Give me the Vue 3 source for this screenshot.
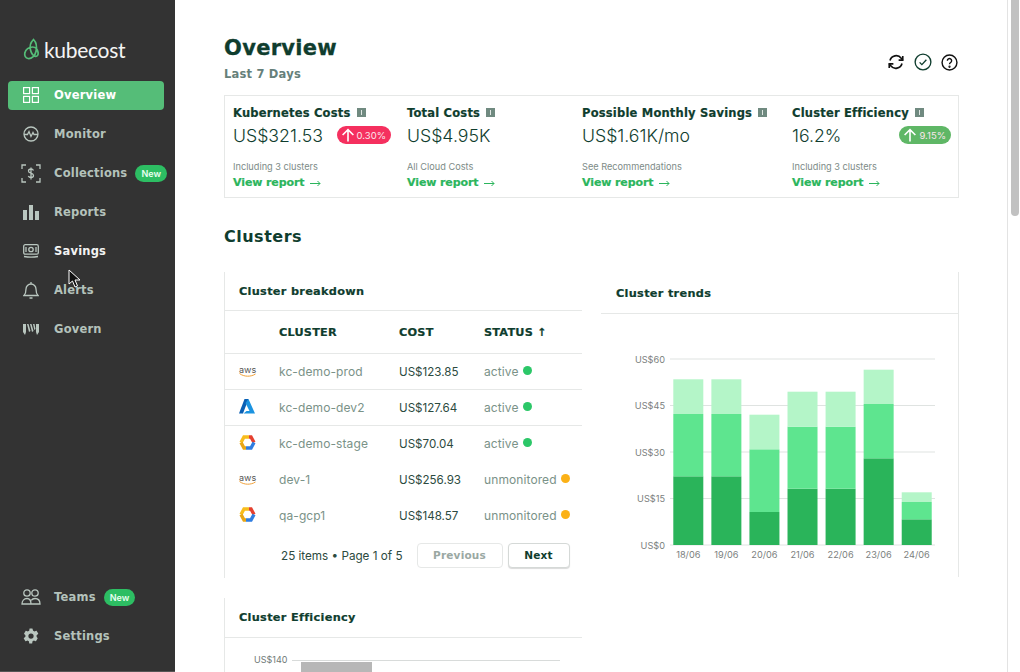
<template>
  <div class="page">
    <aside class="sidebar">
      <div class="logo">
        <svg width="18" height="22" viewBox="0 0 18 22" fill="none" stroke="#55bd78" stroke-width="1.700">
          <path d="M10.500 1.500C8 4 6.500 8 7.500 12c.8 3.200 3 6 5 6.300 1.800.3 3-1.500 2.600-3.800C14.600 11.500 12.500 9 9.500 9 6 9 2.500 11.500 1.800 15c-.5 2.700.8 5.200 3.200 5.500 3.500.5 7-2.500 8-7 .9-4 .5-9-2.500-12Z" />
        </svg>
        <span class="logo-text">kubecost</span>
      </div>
      <nav class="nav">
        <a v-for="item in topNav" :key="item.label" class="nav-item" :class="{ active: item.active, bright: item.bright }">
          <span class="nav-icon" v-html="item.icon"></span>
          <span>{{ item.label }}</span>
          <span v-if="item.badge" class="badge">New</span>
        </a>
      </nav>
      <nav class="nav nav-bottom">
        <a v-for="item in bottomNav" :key="item.label" class="nav-item">
          <span class="nav-icon" v-html="item.icon"></span>
          <span>{{ item.label }}</span>
          <span v-if="item.badge" class="badge">New</span>
        </a>
      </nav>
    </aside>

    <main class="main">
      <div class="head">
        <div>
          <h1>Overview</h1>
          <p class="range">Last 7 Days</p>
        </div>
        <div class="head-icons">
          <svg width="18" height="18" viewBox="0 0 24 24" fill="none" stroke="#111" stroke-width="2.200">
            <path d="M4 10a8.500 8.500 0 0 1 15-3l2 2.500M20 14a8.500 8.500 0 0 1-15 3l-2-2.500" />
            <path d="M21 4v5.500h-5.500M3 20v-5.500h5.500" />
          </svg>
          <svg width="18" height="18" viewBox="0 0 24 24" fill="none" stroke="#0f3d2e" stroke-width="1.800">
            <circle cx="12" cy="12" r="10.500" />
            <path d="M7.500 12.500l3 3 6-6.500" />
          </svg>
          <svg width="17" height="17" viewBox="0 0 24 24" fill="none" stroke="#111" stroke-width="2">
            <circle cx="12" cy="12" r="10.500" />
            <path d="M9 9.500a3 3 0 1 1 4.600 2.500c-1 .7-1.600 1.300-1.600 2.500" />
            <circle cx="12" cy="18" r=".6" fill="#111" />
          </svg>
        </div>
      </div>

      <section class="summary">
        <div v-for="s in summary" :key="s.title" class="stat">
          <div class="stat-title">{{ s.title }} <i class="info"></i></div>
          <div class="stat-value">
            <span>{{ s.value }}</span>
            <span v-if="s.delta" class="delta" :class="s.tone">
              <svg width="14" height="14" viewBox="0 0 13 13" fill="none" stroke="#fff" stroke-width="1.500"><path d="M6.500 12.500V1.500M1.500 6.500l5-5 5 5" /></svg>
              {{ s.delta }}
            </span>
          </div>
          <div class="stat-note">{{ s.note }}</div>
          <a class="stat-link">View report
            <svg width="11" height="7" viewBox="0 0 11 7" fill="none" stroke="#2bb55c" stroke-width="1"><path d="M0 3.500h10M7.500 1l2.500 2.500L7.500 6" /></svg>
          </a>
        </div>
      </section>

      <h2>Clusters</h2>

      <div class="panels">
        <div class="col">
          <section class="panel breakdown">
            <h3 class="panel-title">Cluster breakdown</h3>
            <table>
              <thead>
                <tr>
                  <th class="c-icon"></th>
                  <th class="c-name">CLUSTER</th>
                  <th class="c-cost">COST</th>
                  <th>STATUS <span class="sort">↑</span></th>
                </tr>
              </thead>
              <tbody>
                <tr v-for="row in clusters" :key="row.name">
                  <td class="c-icon">
                    <div v-if="row.provider === 'aws'" class="aws">
                      <span>aws</span>
                      <svg width="17" height="5" viewBox="0 0 17 5" fill="none"><path d="M.5 .5C5 4 12 4 16.500 1" stroke="#f0a13a" stroke-width="1" /></svg>
                    </div>
                    <svg v-else-if="row.provider === 'azure'" width="16" height="15" viewBox="0 0 16 15">
                      <path d="M5.500 0h4L4 14.500H0Z" fill="#0a5fb4" />
                      <path d="M9.500 0l6.500 14.500H4.500l3-2.500h3L6.500 4Z" fill="#1b93e0" />
                    </svg>
                    <svg v-else width="17" height="15" viewBox="0 0 17 15" fill="none" stroke-width="3.400">
                      <path d="M2 7.500L5 2h5" stroke="#f8bd1c" />
                      <path d="M10 2h2l3 5.500" stroke="#e5402f" />
                      <path d="M15 7.500L12 13H7" stroke="#2f7de1" />
                      <path d="M7 13H5L2 7.500" stroke="#e8a617" />
                    </svg>
                  </td>
                  <td class="name">{{ row.name }}</td>
                  <td class="cost">{{ row.cost }}</td>
                  <td class="status">{{ row.status }} <i class="dot" :class="row.status"></i></td>
                </tr>
              </tbody>
            </table>
            <div class="pager">
              <span>25 items • Page 1 of 5</span>
              <button class="btn off">Previous</button>
              <button class="btn">Next</button>
            </div>
          </section>

          <section class="panel efficiency">
            <h3 class="panel-title">Cluster Efficiency</h3>
            <div class="eff-chart">
              <span class="eff-label">US$140</span>
              <div class="eff-plot"><div class="eff-bar"></div></div>
            </div>
          </section>
        </div>

        <section class="panel trends">
          <h3 class="panel-title">Cluster trends</h3>
          <svg class="chart" width="357" height="262" viewBox="601 314 357 262">
            <g v-for="t in ticks" :key="t.label">
              <line x1="670" x2="935" :y1="t.y" :y2="t.y" stroke="#dfe3e1" stroke-width="1" />
              <text x="665" :y="t.y + 3.500" text-anchor="end" class="axis">{{ t.label }}</text>
            </g>
            <g v-for="(b, i) in bars" :key="b.day">
              <rect :x="barX(i)" :y="545 - b.d" width="30" :height="b.d" fill="#2ab45a" />
              <rect :x="barX(i)" :y="545 - b.d - b.m" width="30" :height="b.m" fill="#5ee58f" />
              <rect :x="barX(i)" :y="545 - b.d - b.m - b.l" width="30" :height="b.l" fill="#b4f5c8" />
              <text :x="barX(i) + 15" y="558" text-anchor="middle" class="axis">{{ b.day }}</text>
            </g>
          </svg>
        </section>
      </div>
    </main>

    <div class="scrollbar"><div class="thumb"></div></div>

    <svg class="cursor" width="14" height="20" viewBox="0 0 14 20">
      <path d="M1 1v14l3.500-3 2.500 6 2.500-1-2.500-6h5Z" fill="#111" stroke="#fff" stroke-width="1" />
    </svg>
  </div>
</template>

<script setup>
const stroke = 'fill="none" stroke="#b9c6bf" stroke-width="1.300"'

const topNav = [
  { label: 'Overview', active: true, icon: `<svg width="16" height="16" viewBox="0 0 16 16" fill="none" stroke="#fff" stroke-width="1.200"><rect x=".6" y=".6" width="6" height="6"/><rect x="9.400" y=".6" width="6" height="6"/><rect x=".6" y="9.400" width="6" height="6"/><rect x="9.400" y="9.400" width="6" height="6"/></svg>` },
  { label: 'Monitor', icon: `<svg width="16" height="16" viewBox="0 0 16 16" ${stroke}><circle cx="8" cy="8" r="7"/><path d="M1 8.500h3.500L6 5.500l2 5 2-4 1 2h4"/></svg>` },
  { label: 'Collections', badge: true, icon: `<svg width="20" height="19" viewBox="0 0 20 19" ${stroke}><path d="M1 5V1h4M15 1h4v4M1 14v4h4M15 18h4v-4"/><path d="M12.500 6.500c-.5-1-1.500-1.500-2.500-1.500-1.500 0-2.500.8-2.500 2s1 1.800 2.500 2.200 2.500 1 2.500 2.300-1 2-2.500 2c-1.200 0-2.200-.5-2.700-1.500M10 3.500v12"/></svg>` },
  { label: 'Reports', icon: `<svg width="16" height="15" viewBox="0 0 16 15" fill="#b9c6bf"><rect x="0" y="5" width="4" height="10"/><rect x="6" y="0" width="4" height="15"/><rect x="12" y="6" width="4" height="9"/></svg>` },
  { label: 'Savings', bright: true, icon: `<svg width="16" height="14" viewBox="0 0 16 14" ${stroke}><rect x=".7" y=".7" width="14.600" height="9.500" rx="1.500"/><circle cx="8" cy="5.500" r="2.200"/><path d="M3 3v5M13 3v5M1 12.500c4 .8 10 .8 14 0"/></svg>` },
  { label: 'Alerts', icon: `<svg width="16" height="18" viewBox="0 0 16 18" ${stroke}><path d="M1 14.500c1.500-1.500 2-3 2-6.500a5 5 0 0 1 10 0c0 3.500.5 5 2 6.500ZM6.500 17h3M8 1v2"/></svg>` },
  { label: 'Govern', icon: `<svg width="16" height="13" viewBox="0 0 16 13" fill="#b9c6bf"><path d="M0 1h3v8l-1 3-2-3ZM13 1h3v8l-2 3-1-3ZM4 1h1.500l2 7-1.500 1ZM7 1h1.500l2 7-1.500 1ZM10 1h1.500l1 5-1.200 1Z"/></svg>` },
]

const bottomNav = [
  { label: 'Teams', badge: true, icon: `<svg width="20" height="16" viewBox="0 0 20 16" ${stroke}><circle cx="6" cy="4" r="3.200"/><circle cx="14" cy="4" r="3.200"/><path d="M1 15c0-3 2-5.500 5-5.500 2 0 4 1.500 4 5.500ZM10 15h9c0-3.500-2-5.500-5-5.500-1.500 0-2.800.5-3.800 1.800"/></svg>` },
  { label: 'Settings', icon: `<svg width="18" height="18" viewBox="0 0 24 24" fill="#b9c6bf"><path d="M19.400 13c.1-.3.100-.7.100-1s0-.7-.1-1l2.100-1.600c.2-.2.200-.4.100-.6l-2-3.500c-.1-.2-.4-.3-.6-.2l-2.500 1c-.5-.4-1.100-.7-1.700-1L14 2.400c0-.2-.2-.4-.5-.4h-3c-.3 0-.5.200-.5.400l-.4 2.700c-.6.200-1.200.6-1.700 1l-2.500-1c-.2-.1-.5 0-.6.200l-2 3.500c-.1.200-.1.400.1.600L4.600 11c-.1.300-.1.700-.1 1s0 .7.100 1l-2.100 1.600c-.2.200-.2.400-.1.600l2 3.500c.1.200.4.300.6.200l2.500-1c.5.400 1.100.7 1.700 1l.4 2.700c0 .2.200.4.500.4h3c.3 0 .5-.2.500-.4l.4-2.700c.6-.2 1.200-.6 1.700-1l2.500 1c.2.100.5 0 .6-.2l2-3.500c.1-.2.100-.4-.1-.6ZM12 15.500a3.500 3.500 0 1 1 0-7 3.500 3.500 0 0 1 0 7Z"/></svg>` },
]

const summary = [
  { title: 'Kubernetes Costs', value: 'US$321.53', delta: '0.30%', tone: 'up-bad', note: 'Including 3 clusters' },
  { title: 'Total Costs', value: 'US$4.95K', note: 'All Cloud Costs' },
  { title: 'Possible Monthly Savings', value: 'US$1.61K/mo', note: 'See Recommendations' },
  { title: 'Cluster Efficiency', value: '16.2%', delta: '9.15%', tone: 'up-good', note: 'Including 3 clusters' },
]

const clusters = [
  { provider: 'aws', name: 'kc-demo-prod', cost: 'US$123.85', status: 'active' },
  { provider: 'azure', name: 'kc-demo-dev2', cost: 'US$127.64', status: 'active' },
  { provider: 'gcp', name: 'kc-demo-stage', cost: 'US$70.04', status: 'active' },
  { provider: 'aws', name: 'dev-1', cost: 'US$256.93', status: 'unmonitored' },
  { provider: 'gcp', name: 'qa-gcp1', cost: 'US$148.57', status: 'unmonitored' },
]

const ticks = [
  { label: 'US$60', y: 359 },
  { label: 'US$45', y: 405.5 },
  { label: 'US$30', y: 452 },
  { label: 'US$15', y: 498.5 },
  { label: 'US$0', y: 545 },
]

// heights in px, read off the chart: dark, mid, light
const bars = [
  { day: '18/06', d: 68.7, m: 62.3, l: 34.7 },
  { day: '19/06', d: 68.7, m: 62.3, l: 34.7 },
  { day: '20/06', d: 33, m: 62.7, l: 34.6 },
  { day: '21/06', d: 56.3, m: 62, l: 35 },
  { day: '22/06', d: 56.3, m: 62, l: 35 },
  { day: '23/06', d: 86.7, m: 54.3, l: 34.3 },
  { day: '24/06', d: 25.7, m: 17.3, l: 9.7 },
]

function barX(i) {
  return 673.3 + i * 38.07
}
</script>

<style>
html, body {
  margin: 0;
  height: 100%;
  overflow: hidden;
  background: #fff;
}
</style>

<style scoped>
.page {
  position: relative;
  display: flex;
  width: 1020px;
  height: 672px;
  overflow: hidden;
  font-family: Inter, "Liberation Sans", sans-serif;
  color: #0f3d2e;
  background: #fff;
}

.sidebar {
  flex: 0 0 175px;
  display: flex;
  flex-direction: column;
  background: #333;
  border-bottom: 1px solid #555;
  box-sizing: border-box;
}

.logo {
  display: flex;
  align-items: center;
  gap: 3px;
  height: 22px;
  margin: 38px 0 21px 23px;
}

.logo-text {
  font-size: 21px;
  letter-spacing: -0.3px;
  color: #f4f4f4;
  font-family: Lato, sans-serif;
}

.nav {
  display: flex;
  flex-direction: column;
  gap: 10px;
}

.nav-bottom {
  margin-top: auto;
  padding-bottom: 20px;
}

.nav-item {
  display: flex;
  align-items: center;
  box-sizing: border-box;
  width: 156px;
  height: 29px;
  margin-left: 8px;
  padding-bottom: 1px;
  border-radius: 4px;
  white-space: nowrap;
  font-family: "DejaVu Sans", sans-serif;
  font-weight: 700;
  font-size: 11.500px;
  letter-spacing: 0.2px;
  color: #b4c2bb;
}

.nav-item.active {
  background: #55bd78;
  color: #fff;
}

.nav-item.bright {
  color: #f2f2f2;
}

.nav-icon {
  flex: 0 0 22px;
  display: flex;
  justify-content: center;
  margin: 0 12px 0 12px;
}

.badge {
  display: inline-block;
  margin-left: 8px;
  padding: 0 6px;
  height: 17px;
  line-height: 17px;
  border-radius: 9px;
  background: #2dbe63;
  color: #e8fff0;
  font-family: Inter, sans-serif;
  font-size: 9px;
  font-weight: 600;
  letter-spacing: 0;
}

.main {
  flex: 0 0 735px;
  margin-left: 49px;
  padding-top: 34px;
}

.head {
  display: flex;
  justify-content: space-between;
  align-items: flex-end;
  height: 61px;
}

h1 {
  margin: 0 0 6px;
  font-family: "DejaVu Sans", sans-serif;
  font-size: 21px;
  line-height: 26px;
  font-weight: 700;
  letter-spacing: 0.3px;
  -webkit-text-stroke: 0.3px #0f3d2e;
}

.range {
  margin: 0 0 14px;
  font-family: "DejaVu Sans", sans-serif;
  font-size: 11.500px;
  font-weight: 700;
  letter-spacing: 0.2px;
  color: #66807a;
}

.head-icons {
  display: flex;
  align-items: center;
  gap: 9px;
  margin: 0 0 24px;
  padding-right: 1px;
}

.summary {
  display: grid;
  grid-template-columns: 174px 175px 210px 1fr;
  height: 103px;
  box-sizing: border-box;
  padding: 10px 7px 0 8px;
  border: 1px solid #e6e8e7;
}

.stat {
  display: flex;
  flex-direction: column;
}

.stat-title {
  font-family: "DejaVu Sans", sans-serif;
  font-size: 11.500px;
  line-height: 14px;
  font-weight: 700;
  letter-spacing: 0.2px;
  -webkit-text-stroke: 0.2px #0f3d2e;
  white-space: nowrap;
}

.info {
  position: relative;
  display: inline-block;
  width: 9px;
  height: 9px;
  margin-left: 2px;
  background: #708a80;
  -webkit-text-stroke: 0;
}

.info::after {
  content: '';
  position: absolute;
  left: 4px;
  top: 2px;
  width: 1px;
  height: 5px;
  background: #dfe6e2;
}

.stat-value {
  display: flex;
  justify-content: space-between;
  align-items: center;
  height: 24px;
  margin-top: 3px;
  font-size: 17.700px;
  font-weight: 300;
  white-space: nowrap;
}

.delta {
  display: inline-flex;
  align-items: center;
  gap: 2px;
  height: 18px;
  padding: 0 5px 0 4px;
  margin-right: 16px;
  border-radius: 9px;
  color: #fbe6ec;
  font-size: 9.500px;
  font-weight: 400;
}

.stat:last-child .delta {
  margin-right: 0;
}

.up-bad {
  background: #f5305f;
}

.up-good {
  background: #5fb766;
}

.stat-note {
  margin-top: 14px;
  font-size: 9.200px;
  line-height: 12px;
  color: #7d8b87;
}

.stat-link {
  display: flex;
  align-items: center;
  gap: 6px;
  margin-top: 3px;
  font-family: "DejaVu Sans", sans-serif;
  font-size: 11px;
  line-height: 14px;
  font-weight: 700;
  letter-spacing: -0.1px;
  -webkit-text-stroke: 0.2px #2bb55c;
  color: #2bb55c;
}

h2 {
  margin: 28px 0 25px;
  font-family: "DejaVu Sans", sans-serif;
  font-size: 16px;
  line-height: 21px;
  font-weight: 700;
  letter-spacing: 0.5px;
}

.panels {
  display: flex;
  gap: 19px;
}

.col {
  flex: 0 0 358px;
  display: flex;
  flex-direction: column;
  gap: 20px;
}

.panel-title {
  margin: 0;
  font-family: "DejaVu Sans", sans-serif;
  font-size: 11.300px;
  line-height: 14px;
  font-weight: 700;
  letter-spacing: 0.3px;
  -webkit-text-stroke: 0.2px #0f3d2e;
}

.breakdown, .efficiency {
  border-left: 1px solid #e6e8e7;
}

.breakdown .panel-title {
  padding: 13px 0 11px 14px;
  border-bottom: 1px solid #e6e8e7;
}

.efficiency .panel-title {
  padding: 13px 0 12px 14px;
  border-bottom: 1px solid #e6e8e7;
}

table {
  width: 100%;
  table-layout: fixed;
  border-collapse: collapse;
  font-size: 12px;
}

th {
  height: 42px;
  padding: 0;
  text-align: left;
  font-family: "DejaVu Sans", sans-serif;
  font-size: 11.300px;
  font-weight: 700;
  letter-spacing: 0.2px;
  -webkit-text-stroke: 0.2px #0f3d2e;
  border-bottom: 1px solid #e6e8e7;
}

.c-icon {
  width: 54px;
  padding-left: 14px;
  box-sizing: border-box;
}

.c-name {
  width: 120px;
}

.c-cost {
  width: 85px;
}

td {
  height: 36px;
  padding: 0;
  box-sizing: border-box;
  white-space: nowrap;
}

tbody tr:nth-child(-n+2) td {
  border-bottom: 1px solid #e6e8e7;
}

.name, .status {
  color: #7a9288;
  letter-spacing: 0.1px;
}

.cost {
  font-size: 11.600px;
  color: #2c4a40;
}

.aws {
  display: flex;
  flex-direction: column;
  width: 17px;
  line-height: 8px;
  font-size: 9px;
  color: #555;
}

.aws svg {
  display: block;
  margin-top: -1px;
}

.dot {
  display: inline-block;
  width: 9px;
  height: 9px;
  margin-left: 1px;
  border-radius: 50%;
  vertical-align: 1px;
}

.dot.active {
  background: #2cc768;
}

.dot.unmonitored {
  background: #fbb117;
}

.sort {
  font-size: 11px;
}

.pager {
  display: flex;
  align-items: center;
  height: 44px;
  padding: 0 0 0 56px;
  font-size: 11.700px;
  color: #2c4a40;
}

.pager span {
  margin-right: 14px;
  white-space: nowrap;
}

.btn {
  box-sizing: border-box;
  height: 25px;
  margin-right: 5px;
  padding: 0 0 1px;
  width: 86px;
  border: 1px solid #d5d9d7;
  border-radius: 4px;
  background: #fff;
  font-family: "DejaVu Sans", sans-serif;
  font-size: 10.500px;
  font-weight: 700;
  letter-spacing: 0.2px;
  color: #0f3d2e;
}

.btn:last-child {
  width: 62px;
  margin-right: 0;
  box-shadow: 0 1px 1px rgba(0, 0, 0, 0.15);
}

.btn.off {
  color: #9aa8a3;
  border-color: #e6e8e7;
}

.eff-chart {
  position: relative;
  height: 40px;
}

.eff-label {
  position: absolute;
  left: 29px;
  top: 16px;
  font-size: 9px;
  color: #707a77;
}

.eff-plot {
  position: absolute;
  left: 67px;
  right: 22px;
  top: 22px;
  border-top: 1px solid #d8dbda;
}

.eff-bar {
  width: 71px;
  height: 12px;
  margin: 1px 0 0 9px;
  background: #b7b7b7;
}

.trends {
  flex: 0 0 358px;
  height: 305px;
  border-right: 1px solid #e6e8e7;
  box-sizing: border-box;
}

.trends .panel-title {
  padding: 15px 0 12px 15px;
  border-bottom: 1px solid #e6e8e7;
}

.chart {
  display: block;
}

.axis {
  font-family: Inter, sans-serif;
  font-size: 9.200px;
  fill: #7b807e;
}

.scrollbar {
  position: absolute;
  top: 0;
  right: 0;
  bottom: 0;
  width: 13px;
  box-sizing: border-box;
  padding: 0 1px 0 3px;
  border-left: 1px solid #e3e3e3;
}

.thumb {
  height: 216px;
  border-radius: 0 0 4px 4px;
  background: #c1c1c1;
}

.cursor {
  position: absolute;
  left: 68px;
  top: 269px;
}
</style>
